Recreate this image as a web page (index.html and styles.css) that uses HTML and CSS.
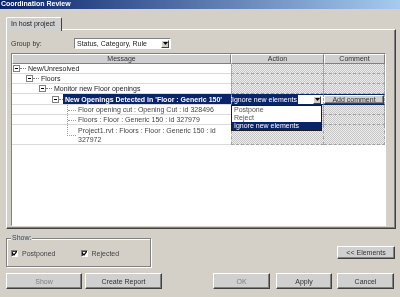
FILE: index.html
```html
<!DOCTYPE html>
<html lang="en">
<head>
    <meta charset="UTF-8">
    <title>Coordination Review</title>
    <link rel="stylesheet" href="styles.css">
</head>
<body>
    <div class="titlebar"><span class="ink">Coordination Review</span></div>

    <div class="content">
        <div class="tabs">
            <div class="tab">In host project</div>
        </div>

        <div class="panel">
            <div class="group-row">
                <span class="group-label">Group by:</span>
                <div class="combo">
                    <span class="combo-text">Status, Category, Rule</span>
                    <span class="arrow-btn"><svg width="5" height="3" viewBox="0 0 5 3"><path d="M0 0h5L2.5 3z"/></svg></span>
                </div>
            </div>

            <div class="table">
                <div class="row head">
                    <div class="th">Message</div>
                    <div class="th">Action</div>
                    <div class="th">Comment</div>
                </div>

                <div class="row">
                    <div class="msg l1"><span class="node"></span><span class="twig"></span>New/Unresolved</div>
                    <div class="cell"></div>
                    <div class="cell"></div>
                </div>
                <div class="row">
                    <div class="msg l2"><span class="node"></span><span class="twig"></span>Floors</div>
                    <div class="cell"></div>
                    <div class="cell"></div>
                </div>
                <div class="row">
                    <div class="msg l3"><span class="node"></span><span class="twig"></span>Monitor new Floor openings</div>
                    <div class="cell"></div>
                    <div class="cell"></div>
                </div>
                <div class="row sel">
                    <div class="msg l4"><span class="node"></span><span class="twig short"></span><span class="hl"><span class="ink">New Openings Detected in 'Floor : Generic 150'</span></span></div>
                    <div class="cell action">
                        <span class="pick"><span class="ink">Ignore new elements</span></span>
                        <span class="arrow-btn"><svg width="5" height="3" viewBox="0 0 5 3"><path d="M0 0h5L2.5 3z"/></svg></span>
                    </div>
                    <div class="cell comment"><button class="btn add">Add comment</button></div>
                </div>
                <div class="row">
                    <div class="msg leaf"><span class="branch"></span><span class="txt">Floor opening cut : Opening Cut : id 328496</span></div>
                    <div class="cell"></div>
                    <div class="cell"></div>
                </div>
                <div class="row">
                    <div class="msg leaf"><span class="branch"></span><span class="txt">Floors : Floor : Generic 150 : id 327979</span></div>
                    <div class="cell"></div>
                    <div class="cell"></div>
                </div>
                <div class="row tall">
                    <div class="msg leaf"><span class="branch end"></span><span class="txt">Project1.rvt : Floors : Floor : Generic 150 : id 327972</span></div>
                    <div class="cell"></div>
                    <div class="cell"></div>
                </div>

                <div class="dropdown">
                    <div class="opt">Postpone</div>
                    <div class="opt">Reject</div>
                    <div class="opt on"><span class="ink">Ignore new elements</span></div>
                </div>
            </div>
        </div>

        <div class="show-row">
            <div class="groupbox">
                <span class="legend">Show:</span>
                <label class="check"><span class="box"><svg width="5" height="5" viewBox="0 0 5 5"><path d="M0 2l2 2 3-4" fill="none" stroke="#000" stroke-width="1.2"/></svg></span>Postponed</label>
                <label class="check"><span class="box"><svg width="5" height="5" viewBox="0 0 5 5"><path d="M0 2l2 2 3-4" fill="none" stroke="#000" stroke-width="1.2"/></svg></span>Rejected</label>
            </div>
            <button class="btn elements">&lt;&lt; Elements</button>
        </div>

        <div class="button-row">
            <button class="btn faded w-show">Show</button>
            <button class="btn w-report">Create Report</button>
            <div class="right-buttons">
                <button class="btn faded w-ok">OK</button>
                <button class="btn w-apply">Apply</button>
                <button class="btn w-cancel">Cancel</button>
            </div>
        </div>
    </div>
</body>
</html>
```

FILE: styles.css
```css
:root {
    --face: #d4d0c8;
    --shadow: #808080;
    --dark: #404040;
    --select: #0a246a;
}

* {
    box-sizing: border-box;
}

body {
    margin: 0;
    width: 400px;
    height: 297px;
    overflow: hidden;
    background: var(--face);
    font-family: "Liberation Sans", Arial, sans-serif;
    font-size: 7px;
    color: #000;
}

/* keep small text free of colour fringes */
.ink,
.tab,
.group-label,
.combo-text,
.th,
.msg:not(.l4),
.opt:not(.on),
.legend,
.check,
.btn {
    filter: grayscale(1);
}

.ink {
    display: inline-block;
}

.titlebar {
    height: 9px;
    padding-left: 1px;
    background: linear-gradient(90deg, #0a246a, #a6caf0);
    color: #fff;
    font-weight: bold;
    line-height: 8px;
}

.content {
    padding: 8px 5px 0 6px;
}

/* tabs */
.tabs {
    display: flex;
    height: 13px;
    margin-bottom: -1px;
}

.tab {
    position: relative;
    z-index: 1;
    width: 56px;
    height: 14px;
    padding-left: 4px;
    background: var(--face);
    border: 1px solid;
    border-color: #fff var(--dark) transparent #fff;
    border-bottom: none;
    border-radius: 2px 2px 0 0;
    line-height: 12px;
    color: #222;
}

.panel {
    width: 390px;
    height: 200px;
    padding: 8px 4px 0;
    border: 1px solid;
    border-color: #fff var(--dark) var(--dark) #fff;
    box-shadow: inset -1px -1px var(--shadow);
}

.group-row {
    display: flex;
    align-items: center;
    height: 11px;
    margin-bottom: 4px;
}

.group-label {
    width: 63px;
    color: #333;
}

.combo {
    display: flex;
    align-items: center;
    width: 97px;
    height: 11px;
    padding: 0 1px 0 2px;
    background: #fff;
    border: 1px solid;
    border-color: var(--shadow) #fff #fff var(--shadow);
}

.combo-text {
    color: #222;
}

.arrow-btn {
    display: flex;
    align-items: center;
    justify-content: center;
    width: 8px;
    height: 8px;
    margin-left: auto;
    background: var(--face);
    border: 1px solid;
    border-color: #fff var(--dark) var(--dark) #fff;
}

.arrow-btn svg {
    display: block;
}

/* grid */
.table {
    position: relative;
    width: 375px;
    height: 173px;
    background: #fff;
    border: 1px solid;
    border-color: var(--shadow) #fff #fff var(--shadow);
}

.row {
    display: grid;
    grid-template-columns: 219px 93px 61px;
    height: 10px;
}

.row.sel {
    height: 11px;
}

.row.tall {
    height: 20px;
}

.th {
    background: var(--face);
    border: 1px solid;
    border-color: #fff var(--shadow) var(--shadow) #fff;
    text-align: center;
    line-height: 8px;
    color: #333;
}

.msg {
    display: flex;
    align-items: center;
    white-space: nowrap;
    overflow: hidden;
    border-bottom: 1px solid #dadada;
    line-height: 9px;
    color: #222;
}

.l1 { padding-left: 1px; }
.l2 { padding-left: 14px; }
.l3 { padding-left: 27px; }
.l4 { padding-left: 40px; }

.node {
    display: flex;
    align-items: center;
    justify-content: center;
    flex: none;
    width: 7px;
    height: 7px;
    background: #fff;
    border: 1px solid var(--shadow);
}

.node::after {
    content: "";
    width: 3px;
    height: 1px;
    background: #000;
}

.twig {
    flex: none;
    width: 6px;
    margin-right: 2px;
    border-top: 1px dotted var(--shadow);
}

.twig.short {
    width: 4px;
    margin-right: 0;
}

.hl {
    flex: 1;
    align-self: stretch;
    padding-left: 2px;
    background: var(--select);
    color: #fff;
    font-weight: bold;
    line-height: 11px;
}

.leaf {
    align-items: stretch;
    padding-left: 55px;
    white-space: normal;
}

.branch {
    display: flex;
    flex-direction: column;
    flex: none;
    width: 9px;
    border-left: 1px dotted #9c9c9c;
}

.branch::before {
    content: "";
    height: 50%;
    border-bottom: 1px dotted #9c9c9c;
}

.branch.end {
    border-left: none;
}

.branch.end::before {
    border-left: 1px dotted #9c9c9c;
}

.txt {
    align-self: center;
    margin-left: 2px;
    color: #444;
}

.cell {
    background: repeating-conic-gradient(#c6c6c6 0 25%, #ededed 0 50%) 0 0 / 2px 2px;
    border-right: 1px dashed #a2a2a2;
    border-bottom: 1px dashed #a2a2a2;
}

.msg + .cell {
    border-left: 1px dashed #a2a2a2;
}

.sel .cell {
    border-top: 1px solid var(--select);
    border-bottom: 1px solid var(--select);
}

.cell.action {
    display: flex;
    align-items: center;
    padding-right: 2px;
    background: #fff;
}

.pick {
    width: 66px;
    background: var(--select);
    color: #fff;
    line-height: 9px;
    white-space: nowrap;
}

.cell.comment {
    display: flex;
    padding: 0;
}

.dropdown {
    position: absolute;
    left: 219px;
    top: 51px;
    width: 91px;
    height: 26px;
    background: #fff;
    border: 1px solid #1c1c1c;
    z-index: 2;
}

.opt {
    height: 8px;
    padding-left: 2px;
    line-height: 8px;
    color: #555;
}

.opt.on {
    background: var(--select);
    color: #fff;
}

/* buttons */
.btn {
    margin: 0;
    padding: 0;
    background: var(--face);
    border: 1px solid;
    border-color: #fff var(--dark) var(--dark) #fff;
    box-shadow: inset -1px -1px var(--shadow);
    font-family: inherit;
    font-size: 7px;
    color: #333;
    text-align: center;
}

.btn.add {
    flex: 1;
    line-height: 7px;
}

.btn.faded {
    color: #808080;
}

/* lower part */
.show-row {
    display: flex;
    justify-content: space-between;
    align-items: flex-start;
    height: 29px;
    margin-top: 9px;
}

.groupbox {
    position: relative;
    display: flex;
    width: 145px;
    height: 29px;
    padding: 11px 0 0 4px;
    border: 1px solid var(--shadow);
    box-shadow: inset 1px 1px #fff, 1px 1px #fff;
}

.legend {
    position: absolute;
    top: -5px;
    left: 4px;
    padding: 0 1px;
    background: var(--face);
    line-height: 8px;
    color: #444;
}

.check {
    display: flex;
    align-items: center;
    width: 75px;
    height: 7px;
    color: #444;
}

.box {
    display: flex;
    align-items: center;
    justify-content: center;
    width: 7px;
    height: 7px;
    margin-right: 4px;
    background: #fff;
    border: 1px solid;
    border-color: var(--shadow) #fff #fff var(--shadow);
    box-shadow: inset 1px 1px #404040;
}

.btn.elements {
    width: 58px;
    height: 13px;
    margin-top: 8px;
}

.button-row {
    display: flex;
    gap: 3px;
    margin-top: 6px;
    padding-right: 1px;
}

.button-row .btn {
    height: 16px;
}

.right-buttons {
    display: flex;
    gap: 5px;
    margin-left: auto;
}

.w-show { width: 76px; }
.w-report { width: 77px; }
.w-ok { width: 57px; margin-right: 1px; }
.w-apply { width: 56px; }
.w-cancel { width: 57px; }
```
